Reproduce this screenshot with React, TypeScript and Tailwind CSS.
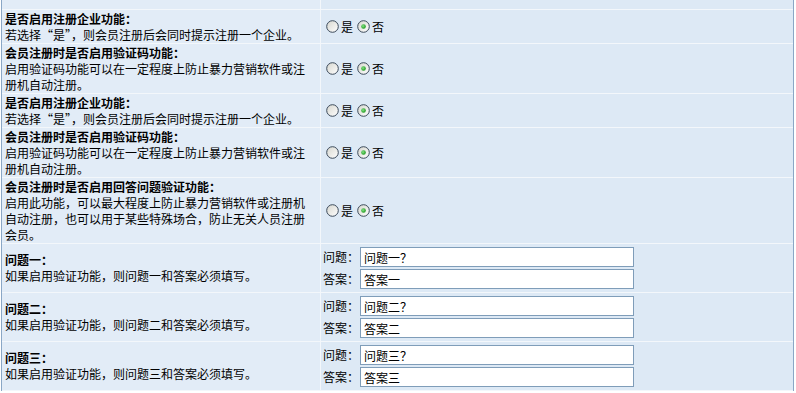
import React from 'react';

const font = { fontFamily: '"Noto Sans CJK SC", "Liberation Sans", sans-serif' };

const Radio: React.FC<{ checked?: boolean }> = ({ checked }) => (
  <svg width="13" height="13" viewBox="0 0 13 13" className="shrink-0">
    <defs>
      <linearGradient id="rg" x1="0" y1="0" x2="1" y2="1">
        <stop offset="0" stopColor="#d6d6ce" />
        <stop offset="1" stopColor="#ffffff" />
      </linearGradient>
      <radialGradient id="dot" cx="0.4" cy="0.4" r="0.6">
        <stop offset="0" stopColor="#86e386" />
        <stop offset="1" stopColor="#1e9a1e" />
      </radialGradient>
    </defs>
    <circle cx="6.5" cy="6.5" r="5.8" fill="url(#rg)" stroke="#3c4a5a" strokeWidth="1" />
    {checked && <circle cx="6.5" cy="6.5" r="2.3" fill="url(#dot)" />}
  </svg>
);

const YesNo = () => (
  <div className="flex items-center pl-[5px] text-[12px] text-black">
    <Radio />
    <span className="ml-[2px] mr-[4px]">是</span>
    <Radio checked />
    <span className="ml-[2px]">否</span>
  </div>
);

const Field: React.FC<{ label: string; value: string }> = ({ label, value }) => (
  <div className="flex items-center">
    <span className="w-[37px] text-[12px]">{label}：</span>
    <input
      readOnly
      value={value}
      style={font}
      className="h-[20px] w-[274px] border border-[#7f9db9] bg-white px-[3px] text-[12px] text-black outline-none"
    />
  </div>
);

type Row = { title: string; desc: string; kind: 'radio' | 'qa'; q?: string; a?: string };

const rows: Row[] = [
  { title: '是否启用注册企业功能：', desc: '若选择“是”，则会员注册后会同时提示注册一个企业。', kind: 'radio' },
  { title: '会员注册时是否启用验证码功能：', desc: '启用验证码功能可以在一定程度上防止暴力营销软件或注册机自动注册。', kind: 'radio' },
  { title: '是否启用注册企业功能：', desc: '若选择“是”，则会员注册后会同时提示注册一个企业。', kind: 'radio' },
  { title: '会员注册时是否启用验证码功能：', desc: '启用验证码功能可以在一定程度上防止暴力营销软件或注册机自动注册。', kind: 'radio' },
  {
    title: '会员注册时是否启用回答问题验证功能：',
    desc: '启用此功能，可以最大程度上防止暴力营销软件或注册机自动注册，也可以用于某些特殊场合，防止无关人员注册会员。',
    kind: 'radio',
  },
  { title: '问题一：', desc: '如果启用验证功能，则问题一和答案必须填写。', kind: 'qa', q: '问题一？', a: '答案一' },
  { title: '问题二：', desc: '如果启用验证功能，则问题二和答案必须填写。', kind: 'qa', q: '问题二？', a: '答案二' },
  { title: '问题三：', desc: '如果启用验证功能，则问题三和答案必须填写。', kind: 'qa', q: '问题三？', a: '答案三' },
];

export default function App() {
  return (
    <div className="h-[393px] w-[796px] overflow-hidden bg-white" style={font}>
      <div className="ml-[1px] w-[793px] border-x border-[#8aa7c6] bg-[#dde9f5] text-black">
        {/* tail of the previous setting */}
        <div className="flex h-[10px] border-b border-[#f3f7fb]">
          <div className="w-[318px] bg-[#e2ecf7]" />
          <div className="flex-1 border-l border-[#f3f7fb]" />
        </div>

        {rows.map((r, i) => (
          <div key={i} className="flex border-b border-[#f3f7fb]">
            <div
              className={`flex w-[318px] flex-col justify-center bg-[#e2ecf7] px-[3px] text-[12px] leading-[16px] ${
                r.kind === 'qa' ? '' : 'pt-[1px]'
              }`}
            >
              <div className="w-[301px] font-bold">{r.title}</div>
              <div className="w-[301px]">{r.desc}</div>
            </div>
            <div className="flex flex-1 items-center border-l border-[#f3f7fb]">
              {r.kind === 'radio' ? (
                <YesNo />
              ) : (
                <div className="flex flex-col gap-[2px] py-[3px] pl-[2px]">
                  <Field label="问题" value={r.q!} />
                  <Field label="答案" value={r.a!} />
                </div>
              )}
            </div>
          </div>
        ))}
      </div>
    </div>
  );
}
